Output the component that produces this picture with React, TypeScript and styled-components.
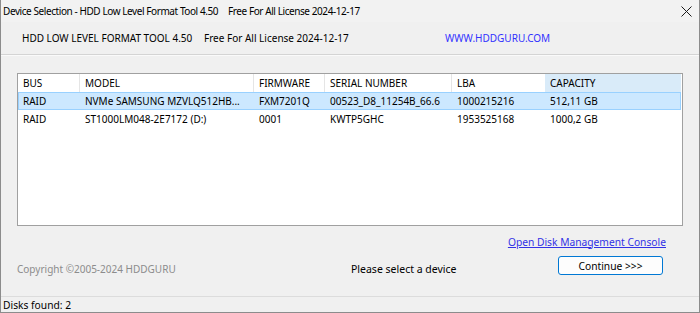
import React from "react";
import styled, { createGlobalStyle } from "styled-components";

const Global = createGlobalStyle`
  html, body { margin: 0; padding: 0; background: #f0f0f0; }
  body { font-family: "Noto Sans", "Open Sans", sans-serif; font-size: 10px; color: #000; }
`;

const Window = styled.div`
  width: 700px;
  height: 313px;
  box-sizing: border-box;
  border: 1px solid #8c8c8c;
  border-top: none;
  display: flex;
  flex-direction: column;
  background: #f0f0f0;
  overflow: hidden;
`;

const TitleBar = styled.div`
  height: 22px;
  flex: none;
  display: flex;
  align-items: center;
  padding-left: 2px;
  background: #f2f2f2;
  font-size: 10px;
  letter-spacing: -0.42px;
  white-space: nowrap;
`;

const TitleName = styled.span`
  width: 225px;
`;

const TitleLicense = styled.span`
  flex: 1;
`;

const CloseBtn = styled.div`
  width: 24px;
  height: 22px;
  display: flex;
  align-items: center;
  justify-content: center;
  margin-right: 1px;
`;

const Header = styled.div`
  height: 32px;
  flex: none;
  display: flex;
  align-items: center;
  padding-left: 21px;
  border-bottom: 1px solid #d4d4d4;
  box-shadow: 0 1px 0 #fafafa;
  white-space: nowrap;
`;

const HeaderLabel = styled.span<{ $w?: number; $blue?: boolean }>`
  width: ${(p) => (p.$w ? `${p.$w}px` : "auto")};
  color: ${(p) => (p.$blue ? "#3232ff" : "#000")};
`;

const Body = styled.div`
  flex: 1;
  display: flex;
  flex-direction: column;
  padding: 18px 16px 0 16px;
`;

const TablePanel = styled.div`
  height: 153px;
  flex: none;
  box-sizing: border-box;
  border: 1px solid #a0a0a0;
  background: #fff;
  display: flex;
  flex-direction: column;
`;

const cols = "62px 174px 71px 127px 93px 1fr";

const HeadRow = styled.div`
  display: grid;
  grid-template-columns: ${cols};
  height: 18px;
  margin-right: 1px;
`;

const HeadCell = styled.div<{ $sorted?: boolean; $divider?: boolean }>`
  padding-left: 5px;
  display: flex;
  align-items: center;
  background: ${(p) => (p.$sorted ? "#d9ebf9" : "#fff")};
  border-right: 1px solid ${(p) => (p.$divider ? "#e5e5e5" : "transparent")};
  white-space: nowrap;
`;

const Row = styled.div<{ $sel?: boolean }>`
  display: grid;
  grid-template-columns: ${cols};
  height: 18px;
  box-sizing: border-box;
  margin-right: 1px;
  background: ${(p) => (p.$sel ? "#cce8ff" : "#fff")};
  border: 1px solid ${(p) => (p.$sel ? "#99d1ff" : "transparent")};
`;

const Cell = styled.div`
  padding-left: 4px;
  display: flex;
  align-items: center;
  white-space: nowrap;
  overflow: hidden;
`;

const LinkRow = styled.div`
  display: flex;
  justify-content: flex-end;
  align-items: center;
  padding-right: 17px;
  height: 15px;
  margin-top: 8px;
`;

const Link = styled.a`
  color: #3232e6;
  font-size: 10.25px;
  text-decoration: underline;
  cursor: pointer;
`;

const Footer = styled.div`
  display: flex;
  align-items: center;
  height: 19px;
  margin-top: 7px;
`;

const Copyright = styled.span`
  color: #8c8c8c;
  width: 334px;
  margin-top: 6px;
`;

const Status = styled.span`
  width: 207px;
  font-size: 10.5px;
  margin-top: 6px;
`;

const ContinueButton = styled.button`
  width: 105px;
  height: 19px;
  box-sizing: border-box;
  border: 1px solid #0078d4;
  border-radius: 3px;
  background: #fdfdfd;
  font-family: inherit;
  font-size: 10.25px;
  padding: 0;
  color: #000;
`;

const StatusBar = styled.div`
  height: 15px;
  flex: none;
  margin-top: auto;
  border-top: 1px solid #dcdcdc;
  display: flex;
  align-items: center;
  padding-left: 2px;
  font-size: 10.25px;
`;

const headers = ["BUS", "MODEL", "FIRMWARE", "SERIAL NUMBER", "LBA", "CAPACITY"];
const rows = [
  ["RAID", "NVMe SAMSUNG MZVLQ512HB...", "FXM7201Q", "00523_D8_11254B_66.6", "1000215216", "512,11 GB"],
  ["RAID", "ST1000LM048-2E7172 (D:)", "0001", "KWTP5GHC", "1953525168", "1000,2 GB"],
];

export default function App() {
  return (
    <>
      <Global />
      <Window>
        <TitleBar>
          <TitleName>Device Selection - HDD Low Level Format Tool 4.50</TitleName>
          <TitleLicense>Free For All License 2024-12-17</TitleLicense>
          <CloseBtn>
            <svg width="11" height="11" viewBox="0 0 11 11">
              <path d="M0.5 0.5 L10.5 10.5 M10.5 0.5 L0.5 10.5" stroke="#1a1a1a" strokeWidth="1" />
            </svg>
          </CloseBtn>
        </TitleBar>
        <Header>
          <HeaderLabel $w={182}>HDD LOW LEVEL FORMAT TOOL 4.50</HeaderLabel>
          <HeaderLabel $w={241}>Free For All License 2024-12-17</HeaderLabel>
          <HeaderLabel $blue>WWW.HDDGURU.COM</HeaderLabel>
        </Header>
        <Body>
          <TablePanel>
            <HeadRow>
              {headers.map((h, i) => (
                <HeadCell key={h} $sorted={i === 5} $divider={i < 4}>
                  {h}
                </HeadCell>
              ))}
            </HeadRow>
            {rows.map((r, i) => (
              <Row key={i} $sel={i === 0}>
                {r.map((c, j) => (
                  <Cell key={j}>{c}</Cell>
                ))}
              </Row>
            ))}
          </TablePanel>
          <LinkRow>
            <Link>Open Disk Management Console</Link>
          </LinkRow>
          <Footer>
            <Copyright>Copyright ©2005-2024 HDDGURU</Copyright>
            <Status>Please select a device</Status>
            <ContinueButton>Continue &gt;&gt;&gt;</ContinueButton>
          </Footer>
        </Body>
        <StatusBar>Disks found: 2</StatusBar>
      </Window>
    </>
  );
}
